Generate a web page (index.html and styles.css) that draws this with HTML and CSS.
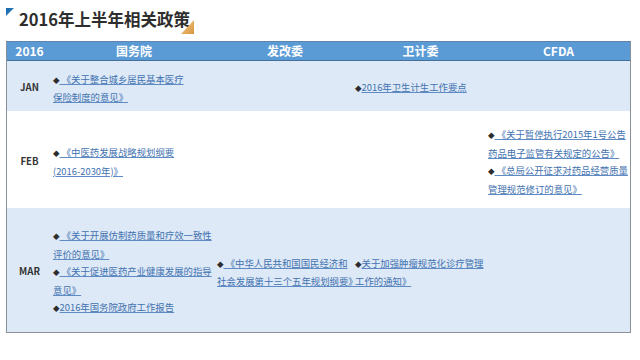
FILE: index.html
```html
<!DOCTYPE html>
<html lang="zh-CN">
<head>
<meta charset="utf-8">
<title>2016年上半年相关政策</title>
<link rel="stylesheet" href="styles.css">
</head>
<body>
<div class="slide">
  <div class="title">
    <svg class="tri-blue" width="8" height="8" viewBox="0 0 8 8"><defs><linearGradient id="gb" x1="0" y1="0" x2="1" y2="1"><stop offset="0" stop-color="#1763a8"/><stop offset="1" stop-color="#3a8ccf"/></linearGradient></defs><polygon points="0,0 8,0 0,8" fill="url(#gb)"/></svg>
    <h1 class="title-text">2016年上半年相关政策</h1>
    <svg class="tri-orange" width="13" height="14" viewBox="0 0 13 14"><defs><linearGradient id="go" x1="0" y1="0" x2="1" y2="1"><stop offset="0" stop-color="#f3c98e"/><stop offset="1" stop-color="#d8963f"/></linearGradient></defs><polygon points="13,0 13,14 0,14" fill="url(#go)"/></svg>
  </div>

  <div class="table">
    <div class="row head">
      <div class="cell">2016</div>
      <div class="cell">国务院</div>
      <div class="cell">发改委</div>
      <div class="cell">卫计委</div>
      <div class="cell">CFDA</div>
    </div>

    <div class="row jan alt">
      <div class="cell lbl">JAN</div>
      <div class="cell txt">
        <p class="item"><span class="dia">◆</span><a href="#">&nbsp;《关于整合城乡居民基本医疗<br>保险制度的意见》</a></p>
      </div>
      <div class="cell txt"></div>
      <div class="cell txt">
        <p class="item"><span class="dia">◆</span><a href="#">2016年卫生计生工作要点</a></p>
      </div>
      <div class="cell txt"></div>
    </div>

    <div class="row feb">
      <div class="cell lbl">FEB</div>
      <div class="cell txt">
        <p class="item"><span class="dia">◆</span><a href="#">&nbsp;《中医药发展战略规划纲要<br>(2016-2030年)》</a></p>
      </div>
      <div class="cell txt"></div>
      <div class="cell txt"></div>
      <div class="cell txt">
        <p class="item"><span class="dia">◆</span><a href="#">&nbsp;《关于暂停执行2015年1号公告<br>药品电子监管有关规定的公告》</a></p>
        <p class="item"><span class="dia">◆</span><a href="#">&nbsp;《总局公开征求对药品经营质量<br>管理规范修订的意见》</a></p>
      </div>
    </div>

    <div class="row mar alt">
      <div class="cell lbl">MAR</div>
      <div class="cell txt">
        <p class="item"><span class="dia">◆</span><a href="#">&nbsp;《关于开展仿制药质量和疗效一致性<br>评价的意见》</a></p>
        <p class="item"><span class="dia">◆</span><a href="#">&nbsp;《关于促进医药产业健康发展的指导<br>意见》</a></p>
        <p class="item"><span class="dia">◆</span><a href="#">2016年国务院政府工作报告</a></p>
      </div>
      <div class="cell txt">
        <p class="item"><span class="dia">◆</span><a href="#">&nbsp;《中华人民共和国国民经济和<br>社会发展第十三个五年规划纲要》</a></p>
      </div>
      <div class="cell txt">
        <p class="item"><span class="dia">◆</span><a href="#">关于加强肿瘤规范化诊疗管理<br>工作的通知》</a></p>
      </div>
      <div class="cell txt"></div>
    </div>
  </div>
</div>
</body>
</html>
```
FILE: styles.css
```css
* { box-sizing: border-box; }
html, body { margin: 0; padding: 0; background: #ffffff; }
body {
  width: 640px;
  height: 360px;
  overflow: hidden;
  font-family: "Noto Sans CJK SC", "Noto Sans", sans-serif;
}
.slide { width: 640px; height: 360px; }

.title {
  position: relative;
  display: flex;
  align-items: flex-start;
  gap: 5px;
  padding: 8px 0 0 6px;
  height: 41px;
}
.tri-blue { display: block; margin-top: 0; }
.title-text {
  margin: 0;
  font-size: 16.5px;
  line-height: 22px;
  font-weight: 700;
  color: #2e2e2e;
}
.tri-orange { position: absolute; left: 181px; top: 20px; }

.table {
  margin-left: 6px;
  width: 625px;
  border: 1px solid #8a9098;
  border-top-color: #5f83ad;
}
.row {
  display: grid;
  grid-template-columns: 45px 164px 138px 133px 143px;
}
.head {
  height: 19px;
  background: #5b9bd5;
  border-bottom: 1px solid #41719c;
}
.head .cell {
  color: #ffffff;
  font-weight: 700;
  font-size: 12px;
  line-height: 18px;
  text-align: center;
}
.jan { height: 50px; }
.feb { height: 97px; }
.mar { height: 124px; }
.alt { background: #dde9f6; }
.feb { background: #ffffff; }

.lbl {
  display: flex;
  align-items: center;
  justify-content: center;
  padding-top: 2px;
  font-size: 9.6px;
  font-weight: 700;
  color: #333333;
}
.txt {
  display: flex;
  flex-direction: column;
  justify-content: center;
  padding: 5px 0 0 1px;
  font-size: 9.4px;
  line-height: 17.5px;
  white-space: nowrap;
}
.item { margin: 0; }
.dia {
  font-family: "DejaVu Sans", sans-serif;
  font-size: 8.5px;
  color: #2d2d2d;
}
.item a {
  color: #4372b0;
  text-decoration: underline;
  text-decoration-color: #5f8bc4;
}
```
